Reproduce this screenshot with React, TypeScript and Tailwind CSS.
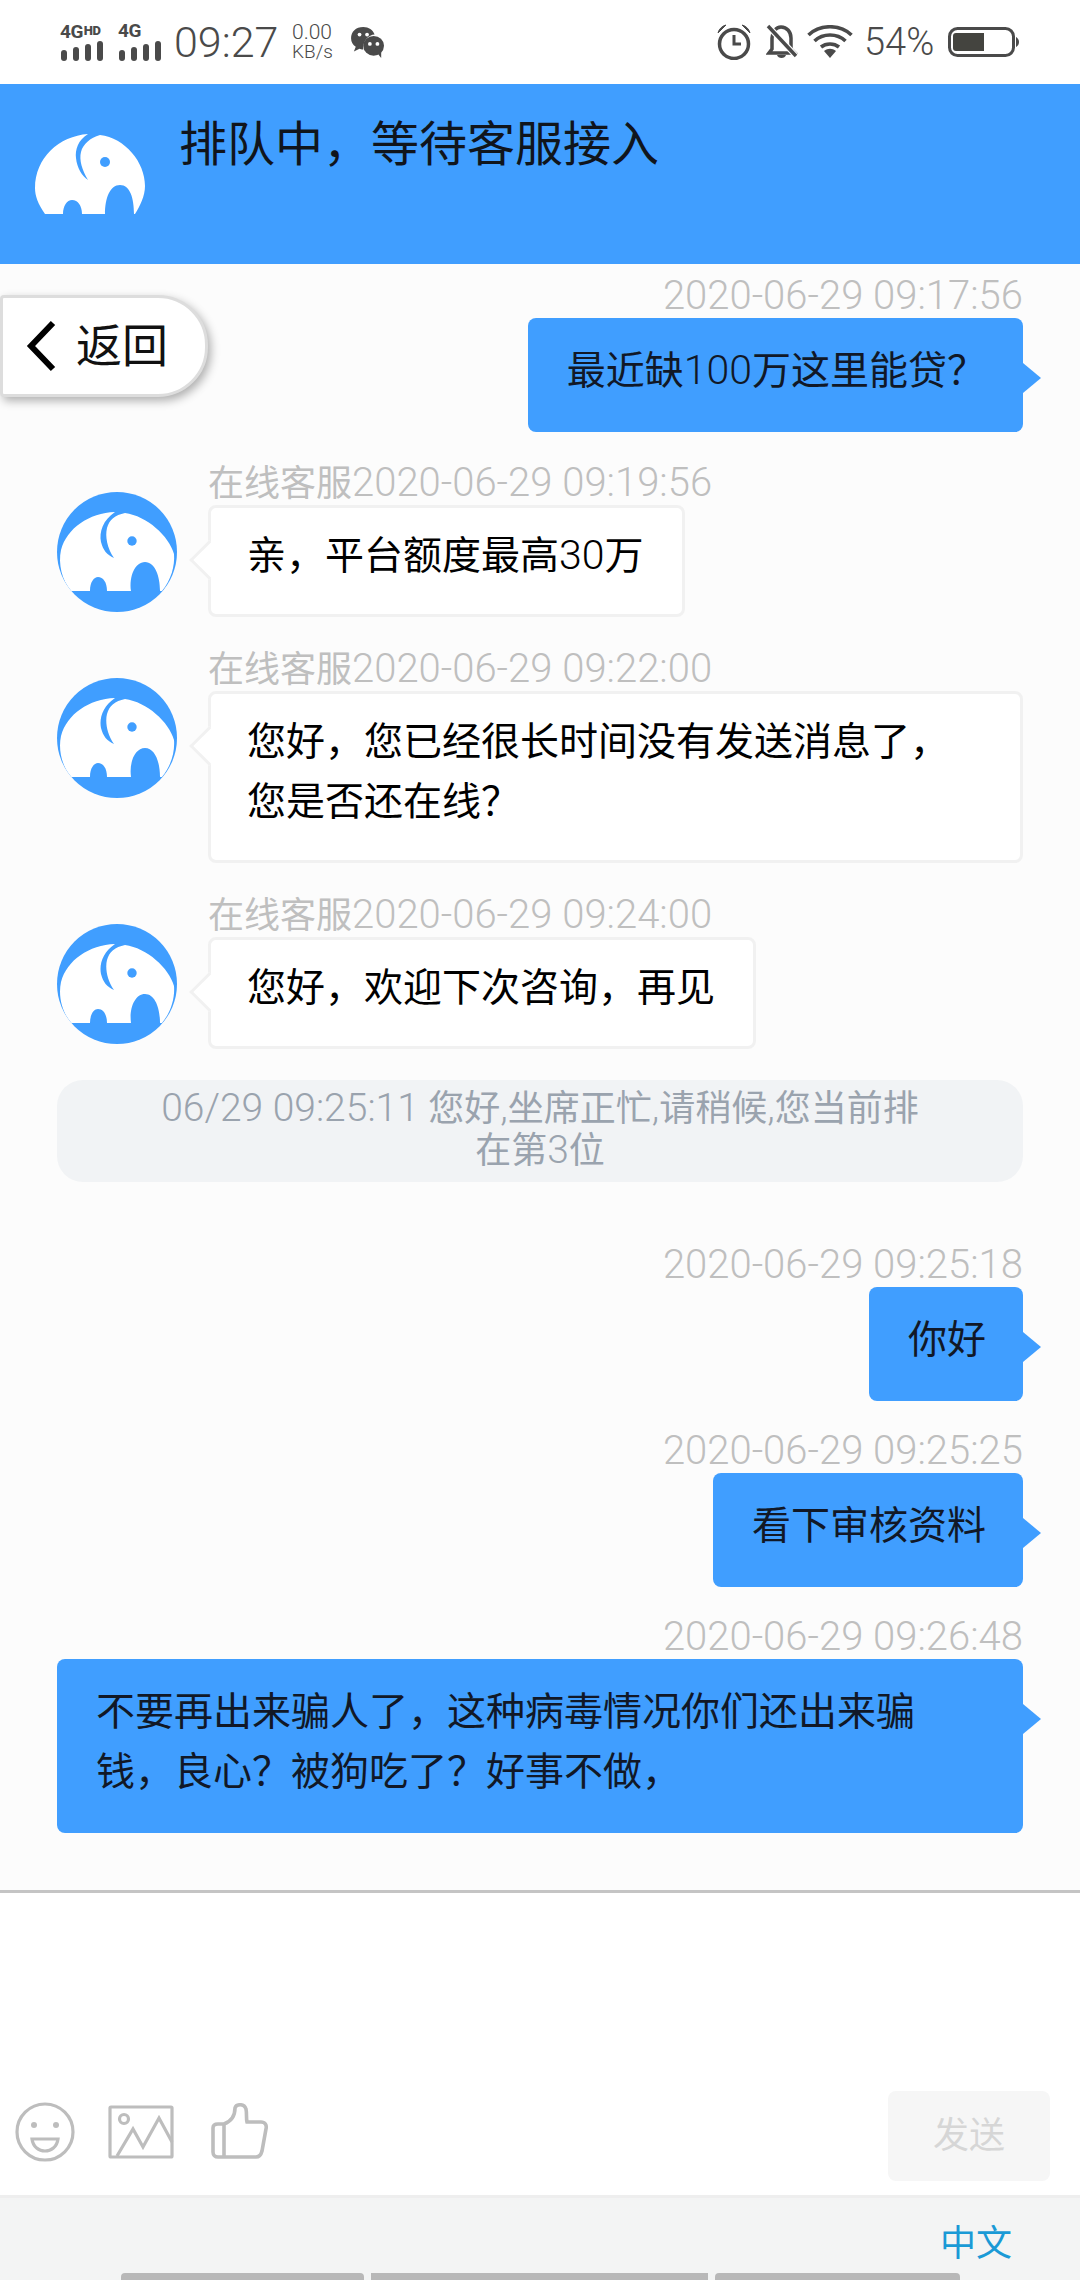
import React from "react";

const FONT = "font-['Roboto','Noto_Sans_CJK_SC',sans-serif]";
const SPLIT = /([0-9A-Za-z:\-\/ ,.]+)/;

function Mix({ text, latin }: { text: string; latin: string }) {
  return (
    <>
      {text.split(SPLIT).map((part, i) =>
        i % 2 === 1 ? (
          <span key={i} className={latin}>
            {part}
          </span>
        ) : (
          <React.Fragment key={i}>{part}</React.Fragment>
        )
      )}
    </>
  );
}

function HeaderElephant() {
  return (
    <svg viewBox="0 0 110 80" className="w-[110px] h-[80px] mt-[50px] shrink-0">
      <path
        fill="#fff"
        d="M10 80 C3 70 0 62 0 54 C0 24 24 2 53 0 C43 6 40 16 41 24 C42 34 47 42 53 46 C47 36 44 26 46 18 C48 10 55 4 65 1 C90 4 110 28 110 52 C110 62 105 72 100 80 H99 C99 64 95 51 85 51 C75 51 70 64 70 80 H47 C47 72 43 66 37 66 C32 66 28 72 28 80 Z"
      />
      <circle cx="70" cy="28" r="5" fill="#409eff" />
    </svg>
  );
}

function Avatar() {
  return (
    <div className="w-[120px] h-[120px] rounded-full bg-[#409eff] overflow-hidden shrink-0">
      <svg viewBox="0 0 120 120" className="w-[120px] h-[120px] block">
        <path
          fill="#fff"
          d="M14 99 C5 88 1 72 4 58 C10 36 32 21 58 20 C46 28 42 40 44 50 C46 58 50 63 57 66 C50 56 48 44 50 36 C52 28 58 23 68 21 C90 24 112 44 117 62 C118 74 114 88 105 99 H103 C103 84 98 70 88 70 C78 70 72 84 74 99 H50 C50 90 46 85 41 85 C37 85 33 90 33 99 Z"
        />
        <circle cx="75" cy="49" r="4.7" fill="#409eff" />
      </svg>
    </div>
  );
}

function Time({ children, right }: { children: string; right?: boolean }) {
  return (
    <div className={`h-[44px] pt-[1px] leading-[44px] text-[36px] text-[#bfbfbf] whitespace-nowrap ${right ? "text-right" : ""}`}>
      <Mix text={children} latin="text-[40px] leading-none font-light" />
    </div>
  );
}

function UserMsg({ time, text, mt }: { time: string; text: string; mt: string }) {
  return (
    <div className={`flex flex-col items-end ${mt}`}>
      <Time right>{time}</Time>
      <div className="relative bg-[#409eff] rounded-[8px] pl-[39px] pr-[37px] pt-[23px] pb-[31px] leading-[60px] text-[39px] text-[#111827] max-w-[966px]">
        <Mix text={text} latin="text-[41px] leading-none font-light" />
        <span className="absolute right-[-18px] top-[45px] w-[18px] h-[30px] bg-[#409eff] [clip-path:polygon(0_0,100%_50%,0_100%)]" />
      </div>
    </div>
  );
}

function AgentMsg({ time, text, mt, extra }: { time: string; text: string; mt: string; extra?: string }) {
  return (
    <div className={`flex ${mt}`}>
      <div className="w-[151px] shrink-0 pt-[31px]">
        <Avatar />
      </div>
      <div className="flex flex-col items-start">
        <Time>{time}</Time>
        <div className={`relative bg-white border-[3px] border-[#f1f1f1] rounded-[8px] pl-[36px] pr-[38px] pt-[18px] pb-[28px] leading-[60px] text-[39px] text-black ${extra ?? ""}`}>
          <Mix text={text} latin="text-[41px] leading-none font-light" />
          <span className="absolute left-[-16px] top-[38px] w-[28px] h-[28px] bg-white border-l-[3px] border-b-[3px] border-[#f1f1f1] rotate-45" />
        </div>
      </div>
    </div>
  );
}

function StatusBar() {
  const c = "#4a4a4a";
  const Bars = () => (
    <svg width="44" height="20" viewBox="0 0 44 20" className="block">
      <rect x="1" y="9" width="6" height="11" rx="3" fill={c} />
      <rect x="13" y="6" width="6" height="14" rx="3" fill={c} />
      <rect x="25" y="3" width="6" height="17" rx="3" fill={c} />
      <rect x="37" y="0" width="6" height="20" rx="3" fill={c} />
    </svg>
  );
  return (
    <div className="h-[84px] bg-white flex items-center justify-between text-[#4a4a4a] pl-[60px] pr-[60px] shrink-0">
      <div className="flex items-center">
        <div className="w-[58px] flex flex-col">
          <div className="h-[14px] leading-[14px] text-[19px] font-bold whitespace-nowrap tracking-[-0.5px]">
            4G<span className="text-[13px] font-black align-[3px] ml-[1px]">HD</span>
          </div>
          <div className="mt-[3px]"><Bars /></div>
        </div>
        <div className="w-[56px] flex flex-col">
          <div className="h-[14px] leading-[14px] text-[19px] font-bold tracking-[-0.5px]">4G</div>
          <div className="mt-[3px]"><Bars /></div>
        </div>
        <div className="text-[43px] leading-[44px] w-[118px] font-light">09:27</div>
        <div className="flex flex-col w-[59px] text-[19px] leading-[20px] font-light">
          <span className="text-[21px]">0.00</span>
          <span>KB/s</span>
        </div>
        <svg width="34" height="32" viewBox="0 0 36 34" className="mt-[2px]">
          <path fill={c} d="M13 0 C5 0 0 5 0 12 C0 16 2 19 5 21 L3 26 L9 23 C10 23 11 24 13 24 C12 15 19 8 25 8 C23 3 19 0 13 0 Z" />
          <ellipse cx="24" cy="20" rx="11" ry="10.5" fill={c} />
          <path fill={c} d="M28 28 L32 33 L32 26 Z" />
          <circle cx="9" cy="8" r="2" fill="#fff" />
          <circle cx="17" cy="8" r="2" fill="#fff" />
          <circle cx="20" cy="18" r="2" fill="#fff" />
          <circle cx="28" cy="18" r="2" fill="#fff" />
        </svg>
      </div>
      <div className="flex items-center">
        <svg width="36" height="36" viewBox="0 0 36 36" fill="none" stroke={c} strokeWidth="3.5" className="mr-[14px]">
          <circle cx="18" cy="20" r="14.5" />
          <path d="M18 11 V20 H25" strokeWidth="3" />
          <path d="M2 9 C3 5 6 2 10 1 Z" fill={c} strokeWidth="1" />
          <path d="M34 9 C33 5 30 2 26 1 Z" fill={c} strokeWidth="1" />
        </svg>
        <svg width="32" height="36" viewBox="0 0 32 36" fill="none" stroke={c} strokeWidth="3.5" className="mr-[9px]">
          <path d="M6 25 V14 C6 8 10 3 15 3 C21 3 25 8 25 14 V25 L29 29 H3 Z" />
          <path d="M11 31 C12 35 19 35 20 31 Z" fill={c} stroke="none" />
          <path d="M1 1 L31 33" stroke="#fff" strokeWidth="6" />
          <path d="M2 2 L30 32" />
        </svg>
        <svg width="46" height="34" viewBox="0 0 46 34" fill="none" stroke={c} strokeWidth="3.6" className="mr-[11px]">
          <path d="M1.5 10 C13 -1 33 -1 44.5 10" />
          <path d="M7.5 16 C16 8 30 8 38.5 16" />
          <path d="M14 22 C19 18 27 18 32 22" />
          <path d="M17 26 L23 33 L29 26 C25 23 21 23 17 26 Z" fill={c} stroke="none" />
        </svg>
        <div className="text-[38px] leading-[40px] w-[84px] whitespace-nowrap font-light">54%</div>
        <svg width="72" height="30" viewBox="0 0 72 30">
          <rect x="1.5" y="1.5" width="64" height="27" rx="8" fill="none" stroke={c} strokeWidth="3" />
          <path d="M8 6 H36 V24 H8 C6 24 5 23 5 21 V9 C5 7 6 6 8 6 Z" fill="#44443f" />
          <path d="M68 10 C70 11 71 13 71 15 C71 17 70 19 68 20 Z" fill={c} />
        </svg>
      </div>
    </div>
  );
}

function InputIcons() {
  const s = "#bdbdbd";
  return (
    <div className="flex items-center pl-[15px]">
      <svg width="60" height="60" viewBox="0 0 60 60" fill="none" stroke={s} strokeWidth="3.2">
        <circle cx="30" cy="30" r="28" />
        <circle cx="19" cy="23" r="3" fill={s} stroke="none" />
        <circle cx="41" cy="23" r="3" fill={s} stroke="none" />
        <path d="M17 37 H43 C42 45 36 49 30 49 C24 49 18 45 17 37 Z" />
      </svg>
      <svg width="66" height="54" viewBox="0 0 66 54" fill="none" stroke={s} strokeWidth="3.2" className="ml-[33px]">
        <rect x="2" y="2" width="62" height="50" rx="1" />
        <circle cx="16" cy="14" r="4.5" />
        <path d="M9 51 L25 24 L35 42 L51 13 L64 37" />
      </svg>
      <svg width="58" height="58" viewBox="0 0 58 58" fill="none" stroke={s} strokeWidth="3.6" className="ml-[37px]">
        <path d="M13 21 C21 18 24 12 24 5 C25 1 33 0 35 6 C36 11 35 15 36 19 H50 C54 19 56 22 55 26 L51 48 C50 52 48 54 45 54 H7 C4 54 2 52 2 49 V25 C2 22 4 21 7 21 H13 V54" />
      </svg>
    </div>
  );
}

export default function App() {
  return (
    <div className={`${FONT} relative w-[1080px] h-[2280px] overflow-hidden flex flex-col bg-white`}>
      <StatusBar />

      <header className="h-[180px] bg-[#409eff] shrink-0 flex items-start pl-[35px]">
        <HeaderElephant />
        <div className="ml-[34px] mt-[32px] text-[48px] leading-[58px] text-[#10151c]">排队中，等待客服接入</div>
      </header>

      <main className="h-[1626px] shrink-0 bg-[#fcfcfc] pt-[10px] px-[57px] flex flex-col">
        <UserMsg time="2020-06-29 09:17:56" text="最近缺100万这里能贷？" mt="" />
        <AgentMsg time="在线客服2020-06-29 09:19:56" text="亲，平台额度最高30万" mt="mt-[29px]" />
        <AgentMsg time="在线客服2020-06-29 09:22:00" text="您好，您已经很长时间没有发送消息了，您是否还在线？" mt="mt-[30px]" extra="w-[815px]" />
        <AgentMsg time="在线客服2020-06-29 09:24:00" text="您好，欢迎下次咨询，再见" mt="mt-[30px]" />
        <div className="mt-[31px] h-[102px] bg-[#f1f3f5] rounded-[26px] px-[100px] pt-[8px] text-center text-[36px] leading-[42px] text-[#9aa3ae]">
          <Mix text="06/29 09:25:11 您好,坐席正忙,请稍候,您当前排在第3位" latin="text-[39px] leading-none font-light" />
        </div>
        <UserMsg time="2020-06-29 09:25:18" text="你好" mt="mt-[61px]" />
        <UserMsg time="2020-06-29 09:25:25" text="看下审核资料" mt="mt-[28px]" />
        <UserMsg time="2020-06-29 09:26:48" text="不要再出来骗人了，这种病毒情况你们还出来骗钱，良心？被狗吃了？好事不做，" mt="mt-[28px]" />
      </main>

      <div className="h-[3px] bg-[#c4c4c4] shrink-0" />

      <section className="h-[302px] shrink-0 bg-white flex items-end justify-between pb-[14px] pr-[30px]">
        <div className="mb-[19px]"><InputIcons /></div>
        <div className="w-[162px] h-[90px] bg-[#f6f6f6] rounded-[8px] flex items-center justify-center text-[36px] text-[#d6d6d6]">发送</div>
      </section>

      <footer className="h-[85px] shrink-0 bg-[#f3f4f4] border-t-[3px] border-[#eeeeee] relative">
        <div className="absolute left-[940px] top-[26px] text-[36px] leading-[40px] text-[#1a9ad6]">中文</div>
        <div className="absolute left-[121px] bottom-0 flex gap-[7px]">
          <div className="w-[243px] h-[7px] bg-[#b8b8b8] rounded-t-[4px]" />
          <div className="w-[337px] h-[7px] bg-[#b8b8b8]" />
          <div className="w-[245px] h-[7px] bg-[#b8b8b8] rounded-t-[4px]" />
        </div>
      </footer>

      <div className="absolute left-0 top-[295px] w-[208px] h-[102px] bg-white border-[3px] border-[#dddddd] rounded-r-[50px] rounded-l-[4px] shadow-[3px_4px_10px_rgba(0,0,0,0.3)] flex items-center pl-[23px]">
        <svg width="30" height="52" viewBox="0 0 30 52" fill="none" stroke="#000" strokeWidth="6" strokeLinejoin="miter">
          <path d="M27 3 L5 26 L27 49" />
        </svg>
        <span className="ml-[20px] text-[46px] leading-[56px] text-[#111]">返回</span>
      </div>
    </div>
  );
}
